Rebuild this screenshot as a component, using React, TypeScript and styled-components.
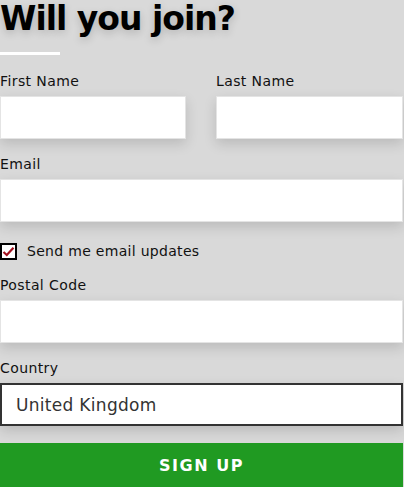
import React from "react";
import styled, { createGlobalStyle } from "styled-components";

const GlobalStyle = createGlobalStyle`
  html, body {
    margin: 0;
    padding: 0;
    background: #d9d9d9;
  }
  body {
    font-family: "DejaVu Sans", "Liberation Sans", sans-serif;
    color: #111;
  }
`

const Form = styled.form`
  width: 403px;
  display: flex;
  flex-direction: column;
`

const Title = styled.h1`
  margin: 0;
  font-size: 33px;
  line-height: 38px;
  font-weight: 700;
  letter-spacing: -1px;
  color: #000;
  text-shadow: 0 3px 8px rgba(0, 0, 0, 0.18);
`

const Rule = styled.div`
  width: 60px;
  height: 3px;
  background: #fff;
  margin: 14px 0 18px;
`

const Row = styled.div`
  display: grid;
  grid-template-columns: 186px 187px;
  column-gap: 30px;
`

const Field = styled.div`
  display: flex;
  flex-direction: column;
  margin-bottom: 17px;
`

const Label = styled.label`
  font-size: 14px;
  line-height: 17px;
  letter-spacing: 0.4px;
  color: #111;
  margin-bottom: 6px;
`

const Input = styled.input<{ $dark?: boolean }>`
  box-sizing: border-box;
  height: 43px;
  width: 100%;
  margin: 0;
  padding: 0 14px;
  background: #fff;
  border: ${(p) => (p.$dark ? "2px solid #333" : "1px solid #e4e4e4")};
  box-shadow: 0 5px 12px rgba(0, 0, 0, 0.14);
  font-family: "DejaVu Sans", "Liberation Sans", sans-serif;
  font-size: 17px;
  letter-spacing: 0.3px;
  color: #333;
  outline: none;
`

const CheckRow = styled.label`
  display: flex;
  align-items: center;
  gap: 10px;
  margin: 4px 0 17px;
  font-size: 14px;
  letter-spacing: 0.3px;
  line-height: 17px;
`

const Box = styled.span`
  box-sizing: border-box;
  width: 17px;
  height: 17px;
  border: 2px solid #000;
  background: #fff;
  display: flex;
  align-items: center;
  justify-content: center;
`

const Button = styled.button`
  height: 44px;
  width: 100%;
  border: none;
  background: #209a22;
  color: #fff;
  font-family: "DejaVu Sans", "Liberation Sans", sans-serif;
  font-weight: 700;
  font-size: 16px;
  letter-spacing: 1.5px;
  text-transform: uppercase;
  cursor: pointer;
`

export default function App() {
  return (
    <>
      <GlobalStyle />
      <Form onSubmit={(e) => e.preventDefault()}>
        <Title>Will you join?</Title>
        <Rule />
        <Row>
          <Field>
            <Label>First Name</Label>
            <Input type="text" />
          </Field>
          <Field>
            <Label>Last Name</Label>
            <Input type="text" />
          </Field>
        </Row>
        <Field>
          <Label>Email</Label>
          <Input type="email" />
        </Field>
        <CheckRow>
          <Box>
            <svg width="13" height="11" viewBox="0 0 13 11">
              <path d="M1.5 6 L4.8 9 L11.5 1.8" fill="none" stroke="#a3121f" strokeWidth="2.2" />
            </svg>
          </Box>
          Send me email updates
        </CheckRow>
        <Field>
          <Label>Postal Code</Label>
          <Input type="text" />
        </Field>
        <Field>
          <Label>Country</Label>
          <Input $dark type="text" defaultValue="United Kingdom" />
        </Field>
        <Button type="submit">Sign up</Button>
      </Form>
    </>
  );
}
